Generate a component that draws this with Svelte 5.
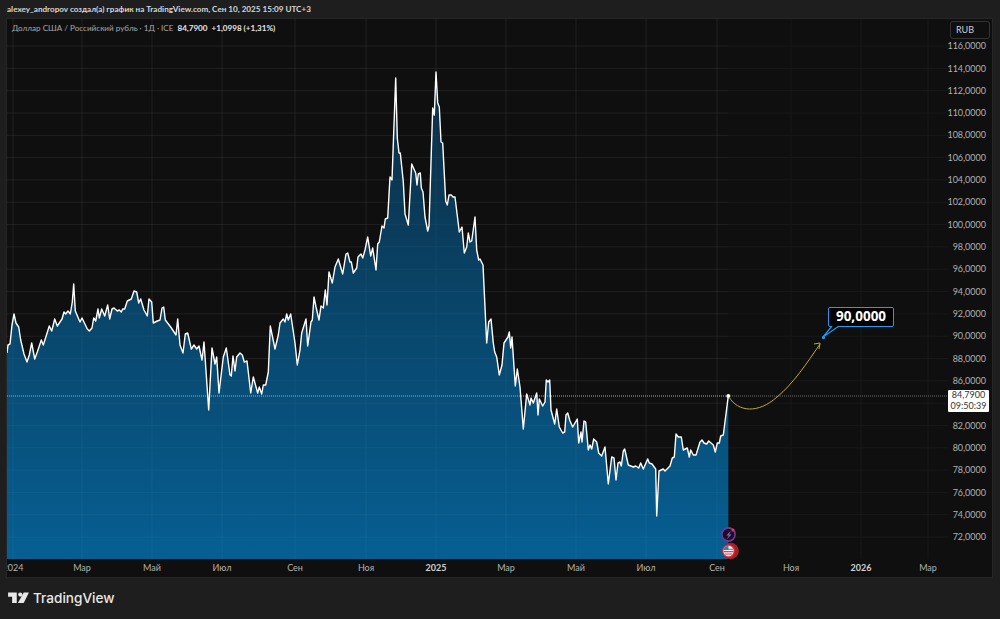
<script>
  // x, y pairs traced off the chart, in page pixels
  const raw = `7,353 8,345 10,344 12,325 14,314 16,323 18.7,327 20.7,340 24,354 27,362 29.3,355 31.7,343 34.7,359 37.3,352 41.3,340 43.3,345 49.3,326 51.7,331 54.7,319 57.3,326 62,319 64,312 65.7,314 68,311 70.3,314 72.3,302 73.7,284 75.3,311 80,322 82,318 87.3,329 89.3,331 92,328 93.7,318 95.7,321 98,309 99.3,318 101.7,309 104.7,316 107.7,305 109.7,319 112,309 114,308 117.3,311 119.3,310 121.3,312 122.7,309 124.7,309 127.3,301 131.3,299 134,291 136.7,292 138.7,303 140.7,299 144,310 147.3,316 149,299 151.7,302 153.3,323 157.3,321 160,320 162,308 163.7,307 165.3,320 170.7,327 176,335 177.7,319 180,345 183,353 185.3,334 187.7,333 191.3,349 194,345 196.7,349 199,346 202,360 204,342 208.7,410 212,348 215,364 216.7,357 219,393 223.3,357 226.3,348 230,375 231.3,376 233,356 235,371 236.7,357 240,353 242.3,355 244.3,362 247,361 250.7,393 253.3,377 257.7,393 259.3,387 261.7,394 263.3,385 265.7,385 268.3,372 270.3,326 275,349 278.3,335 280,323 283.3,319 285,322 286.7,314 288.3,320 290.7,314 295,343 297.3,365 300,350 301.7,333 306,319 307.7,346 311,322 312.3,320 314,297 316,307 319,320 321,306 323.3,308 325.3,290 327,305 329,272 332.3,283 335,267 338.3,259 342.7,274 346,254 347.7,253 350,262 351.3,262 353.3,273 356.7,268 358,257 361,254 362.7,258 365,250 367.7,237 370.7,256 372.7,248 376,270 377.7,244 379.3,242 382,226 384,228 385.3,219 387.7,218 390,177 392,180 395.7,78 397.3,138 399,153 400.3,153 403.3,182 405,214 408.3,225 411.7,164 415.7,173 417,185 418.3,174 420.3,173 421.3,188 423,192 425,217 427.7,231 429,226 432.7,108 434.3,115 436,72 437.7,103 439.3,107 441,142 442.7,143 445.7,201 447.3,205 449,195 451.3,195 453,197 455,197 459.3,232 462,227 464.3,253 466.7,247 468.3,233 470,242 471.7,241 475,217 476.7,250 478.7,260 480,259 483,265 486.7,343 488.7,322 491,319 493.3,343 494.7,352 496.7,357 499.3,375 502,365 504,343 508,337 509.3,332 510.7,348 512,337 515.3,386 517.3,369 520,387 523.3,429 526.7,394 530,405 531,398 533.3,403 536.7,393 538,415 539.3,399 542.7,406 545,402 546.3,380 548,382 549.7,380 551,410 554.7,424 556.7,409 559.3,427 562.7,433 564.7,432 566,415 567.7,413 570,421 572.7,427 577.3,419 578.7,443 581,432 582,442 584,421 585.7,422 588.3,450 590,445 591.7,449 593.7,439 596.7,442 598.7,453 601.7,456 605,447 608.3,484 611.7,457 614,458 616,480 618,463 620,462 621.3,466 623.3,451 624.7,449 628.3,465 633.3,467 635.7,466 638.7,468 640.7,463 643.3,469 647.7,459 649.3,463 652,464 655.7,469 656.7,516 659,471 663.3,469 665,471 670,466 672.3,458 674.3,457 676,434 678.3,437 681.3,437 683.3,450 687.3,448 689.3,457 690.7,450 693.3,455 696,455 700,442 702,440 704,443 706.7,444 708.7,441 713.3,445 715.3,452 717.3,443 719.3,443 720.7,436 723.3,435 728.3,396`;
  const line = raw.split(' ').join(' L');
  const area = `M7,559 L${line} L728.3,559 Z`;

  const prices = [];
  for (let p = 116; p >= 72; p -= 2) {
    prices.push({ y: 46 + (116 - p) * 11.16, label: p + ',0000' });
  }
  const months = [
    { x: 13, label: '2024' }, { x: 82, label: 'Мар' }, { x: 152, label: 'Май' },
    { x: 222, label: 'Июл' }, { x: 295, label: 'Сен' }, { x: 366, label: 'Ноя' },
    { x: 436, label: '2025', strong: true }, { x: 506, label: 'Мар' }, { x: 576, label: 'Май' },
    { x: 646, label: 'Июл' }, { x: 717, label: 'Сен' }, { x: 791, label: 'Ноя' },
    { x: 861, label: '2026', strong: true }, { x: 928, label: 'Мар' }
  ];
</script>

<main class="page">
  <header class="caption">alexey_andropov создал(а) график на TradingView.com, Сен 10, 2025 15:09 UTC+3</header>

  <section class="chart">
    <svg class="canvas" viewBox="7 19 985 558" width="985" height="558">
      <defs>
        <linearGradient id="fill" gradientUnits="userSpaceOnUse" x1="0" y1="72" x2="0" y2="559">
          <stop offset="0" stop-color="#0c2c42" />
          <stop offset="1" stop-color="#065f93" />
        </linearGradient>
        <clipPath id="plot"><rect x="7" y="19" width="941" height="540" /></clipPath>
      </defs>

      {#each prices as p}
        <line class="grid" x1="7" x2="948" y1={p.y} y2={p.y} />
      {/each}
      {#each months as m}
        <line class="grid" x1={m.x} x2={m.x} y1="19" y2="559" />
      {/each}

      <g clip-path="url(#plot)">
        <path d={area} fill="url(#fill)" />
        {#each prices as p}
          <line class="grid over" x1="7" x2="728" y1={p.y} y2={p.y} />
        {/each}
        {#each months as m}
          {#if m.x < 728}
            <line class="grid over" x1={m.x} x2={m.x} y1="19" y2="559" />
          {/if}
        {/each}
        <line class="last" x1="7" x2="728" y1="396" y2="396" />
        <line class="last dim" x1="728" x2="948" y1="396" y2="396" />
        <path d={`M${line}`} class="price" />
        <circle cx="728.3" cy="396" r="2" fill="#fff" />
        <path class="arrow" d="M729,397 C738,412 758,414 777,397 C793,384 807,363 820,344" />
        <path class="arrow" d="M814,344 L820,343 L819,349" />
      </g>

      {#each prices as p}
        {#if p.label !== '84,0000'}
          <text class="axis" x="986" y={p.y + 3.2} text-anchor="end">{p.label}</text>
        {/if}
      {/each}
      {#each months as m}
        <text class="axis" class:strong={m.strong} x={m.x} y="570.5" text-anchor="middle">{m.label}</text>
      {/each}

      <!-- event markers under the last bar -->
      <circle cx="728.5" cy="534.5" r="6.6" fill="#1a1024" stroke="#6e3a9e" stroke-width="1.6" />
      <path d="M731,530.5 L726.5,535.5 L729,535.5 L726.5,539.5 L731.5,534.5 L729,534.5 Z" fill="#a45bd6" />
      <circle cx="733" cy="530" r="1.6" fill="#f23645" />
      <circle cx="730.5" cy="551" r="8.3" fill="#a81f2b" />
      <circle cx="728.5" cy="551" r="6.4" fill="#e03040" />
      <circle cx="728.5" cy="551" r="5.2" fill="#f2f2f2" />
      <path d="M724,549.2 h9 M723.6,551.6 h9.8 M724.4,554 h8" stroke="#e0404a" stroke-width="1.1" />
      <path d="M723.3,551 A5.2,5.2 0 0 1 728.5,545.8 V550 H723.4 Z" fill="#3a78c8" />
    </svg>

    <div class="legend">
      <span>Доллар США / Российский рубль · 1Д · ICE</span>
      <b>84,7900</b>
      <b>+1,0998 (+1,31%)</b>
    </div>
    <div class="currency">RUB</div>
    <div class="callout">90,0000</div>
    <svg class="pointer" width="24" height="16" viewBox="0 0 24 16">
      <path d="M10,0 L1,11 L17,0" fill="#000" stroke="#1e9df1" stroke-width="1.2" />
      <circle cx="1.5" cy="11.5" r="1.6" fill="#1e9df1" />
    </svg>
    <div class="tag"><span>84,7900</span><span>09:50:39</span></div>
  </section>

  <footer class="brand">
    <svg width="21" height="11" viewBox="0 0 36 19" fill="#e8e8e8">
      <path d="M0,1 H15 V19 H7 V8 H0 Z" />
      <circle cx="21" cy="4.5" r="3.6" />
      <path d="M27,1 H36 L27,19 H17 Z" />
    </svg>
    <span>TradingView</span>
  </footer>
</main>

<style>
  :global(body) {
    background: #1e1e1e;
  }
  .page {
    width: 1000px;
    height: 619px;
    display: flex;
    flex-direction: column;
    font-family: Lato, "Open Sans", sans-serif;
    overflow: hidden;
  }
  .caption {
    height: 18px;
    padding-left: 7px;
    font-size: 8.15px;
    font-weight: 700;
    line-height: 19px;
    color: #d8d8d8;
    white-space: nowrap;
  }
  .chart {
    position: relative;
    width: 985px;
    height: 558px;
    margin-left: 6px;
    border: 1px solid #262626;
    background: #0f0f0f;
  }
  .canvas {
    display: block;
  }
  .grid {
    stroke: #191919;
    stroke-width: 1;
  }
  .over {
    stroke: #ffffff;
    stroke-opacity: 0.04;
  }
  .last {
    stroke: #9fb0bb;
    stroke-width: 1;
    stroke-dasharray: 1 1;
  }
  .dim {
    stroke: #6e6e6e;
  }
  .price {
    fill: none;
    stroke: #ffffff;
    stroke-width: 1.4;
    stroke-linejoin: round;
  }
  .arrow {
    fill: none;
    stroke: #bfab2c;
    stroke-width: 1;
  }
  .axis {
    font-size: 9px;
    fill: #b2b2b2;
  }
  .strong {
    font-weight: 700;
    fill: #d0d0d0;
  }
  .legend {
    position: absolute;
    left: 5px;
    top: 3px;
    display: flex;
    gap: 4px;
    font-size: 8.1px;
    line-height: 12px;
    color: #a8a8a8;
  }
  .legend b {
    font-weight: 700;
    color: #e6e6e6;
  }
  .currency {
    position: absolute;
    left: 943px;
    top: 2px;
    width: 40px;
    height: 18px;
    box-sizing: border-box;
    padding-left: 5px;
    border: 1px solid #333;
    border-radius: 3px;
    font-size: 9px;
    line-height: 16px;
    color: #cfcfcf;
  }
  .callout {
    position: absolute;
    left: 821px;
    top: 288px;
    width: 66px;
    height: 20px;
    box-sizing: border-box;
    border: 1.5px solid #1e9df1;
    border-radius: 2px;
    background: #000;
    color: #fff;
    font-family: "Open Sans", sans-serif;
    font-size: 13.5px;
    font-weight: 700;
    line-height: 17px;
    text-align: center;
  }
  .pointer {
    position: absolute;
    left: 815px;
    top: 307px;
  }
  .tag {
    position: absolute;
    left: 941px;
    top: 371px;
    width: 41px;
    height: 22px;
    display: flex;
    flex-direction: column;
    align-items: center;
    background: #fff;
    color: #333;
    border-radius: 1px;
    font-size: 9px;
    line-height: 10.5px;
  }
  .brand {
    flex: 1;
    display: flex;
    align-items: center;
    gap: 4px;
    padding: 0 0 2px 8px;
    color: #e8e8e8;
    font-family: Inter, sans-serif;
    font-size: 13.6px;
    font-weight: 500;
  }
</style>
